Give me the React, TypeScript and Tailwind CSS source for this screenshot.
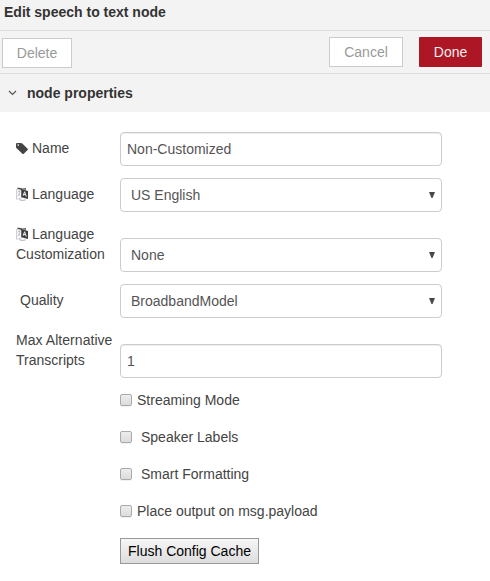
import type { ReactNode } from 'react';

function TagIcon() {
  return (
    <svg className="block h-[13px] w-3" viewBox="0 0 12 13">
      <path
        fillRule="evenodd"
        fill="#444"
        d="M0 2.1Q0 1 1.1 1H4.8Q5.6 1 6.3 1.6L11.6 6.8Q12.2 7.4 11.6 8.1L7.8 11.8Q7.1 12.4 6.4 11.8L.6 6.2Q0 5.6 0 4.9ZM2.2 2.3a.8.8 0 1 0 0 1.6a.8.8 0 1 0 0-1.6Z"
      />
    </svg>
  );
}

function LanguageIcon() {
  return (
    <svg className="block h-[14px] w-3" viewBox="0 0 12 14">
      <path d="M.5 2.6 5.6 1v9.8L.5 12.2Z" fill="#fff" stroke="#c5bfcc" strokeWidth=".8" />
      <path d="M1.4 5.1 4.7 4M2.9 3.2l.2 1.3M4 4.9Q3.4 8 1.5 9.6M1.8 6.4 4.6 9" fill="none" stroke="#aaa4b2" strokeWidth=".7" />
      <path d="M1.5.6 6 1.5V3.3L1.5 1.8Z" fill="#444" />
      <path d="M6 1.5 10 .8V3L6 2.6Z" fill="#777" />
      <path d="M5.3 2.1 12 4v8.1L5.3 10.3Z" fill="#3d3d3d" />
      <path d="M7.1 8.7 8.6 4.7 10.3 9.6M7.7 7.4 9.6 7.9" fill="none" stroke="#fff" strokeWidth=".9" />
      <path d="M3.2 12.6Q6.2 14.1 9.5 12.9" fill="none" stroke="#999" strokeWidth=".8" />
    </svg>
  );
}

function Row({ label, children }: { label: ReactNode; children: ReactNode }) {
  return (
    <div className="flex items-end">
      <div className="mb-2 w-[104px] shrink-0 whitespace-nowrap">{label}</div>
      {children}
    </div>
  );
}

function IconLabel({ icon, text }: { icon: ReactNode; text: string }) {
  return (
    <div className="flex items-center gap-1">
      {icon}
      <span>{text}</span>
    </div>
  );
}

function TextField({ value }: { value: string }) {
  return (
    <input
      type="text"
      defaultValue={value}
      className="h-[34px] w-[322px] rounded border border-[#ccc] bg-white px-1.5 text-[#555] shadow-[inset_0_1px_1px_rgba(0,0,0,0.075)] outline-none"
    />
  );
}

function SelectField({ value }: { value: string }) {
  return (
    <div className="flex h-[34px] w-[322px] items-center justify-between rounded border border-[#ccc] bg-white pl-[10px] pr-[6px] text-[#555]">
      <span>{value}</span>
      <svg className="h-[6px] w-[6px]" viewBox="0 0 6 6">
        <path d="M0 0H6L3.5 6H2.5Z" fill="#484848" />
      </svg>
    </div>
  );
}

function CheckRow({ label, wide }: { label: string; wide?: boolean }) {
  return (
    <label className={`flex h-5 items-center ${wide ? 'gap-[9px]' : 'gap-[5px]'}`}>
      <input
        type="checkbox"
        className="h-3 w-3 appearance-none rounded-[2px] border border-[#aaa] bg-linear-to-b from-[#ededed] to-[#dcdcdc] shadow-[0_1px_0_rgba(0,0,0,0.06)]"
      />
      <span>{label}</span>
    </label>
  );
}

export default function App() {
  return (
    <div className="h-[581px] w-[490px] overflow-hidden bg-white font-['Liberation_Sans',Arial,sans-serif] text-[14px] leading-5 text-[#444]">
      <header className="h-[31px] border-b border-[#ddd] bg-[#f3f3f3] pl-1 pt-[2px] font-bold text-[#333]">
        Edit speech to text node
      </header>
      <div className="flex h-[43px] items-start border-b border-[#ddd] bg-[#f3f3f3] pl-[2px] pr-2 pt-[6px] text-[#999]">
        <button className="mt-px h-[30px] w-[70px] border border-[#ccc] bg-white">Delete</button>
        <button className="ml-auto h-[30px] w-[74px] border border-[#ccc] bg-white">Cancel</button>
        <button className="ml-4 h-[30px] w-[63px] rounded-[1px] bg-[#ad1625] text-[#eee]">Done</button>
      </div>
      <div className="flex h-[38px] items-center bg-[#f3f3f3] pl-2 font-bold text-[#333]">
        <svg className="mr-[10px] h-[6px] w-[9px]" viewBox="0 0 9 6">
          <path d="M1 1 4.5 4.5 8 1" fill="none" stroke="#555" strokeWidth="1.2" />
        </svg>
        node properties
      </div>
      <div className="pl-4 pt-5">
        <div className="flex flex-col gap-3">
          <Row label={<IconLabel icon={<TagIcon />} text="Name" />}>
            <TextField value="Non-Customized" />
          </Row>
          <Row label={<IconLabel icon={<LanguageIcon />} text="Language" />}>
            <SelectField value="US English" />
          </Row>
          <Row
            label={
              <>
                <IconLabel icon={<LanguageIcon />} text="Language" />
                <div>Customization</div>
              </>
            }
          >
            <SelectField value="None" />
          </Row>
          <Row label={<div className="pl-1">Quality</div>}>
            <SelectField value="BroadbandModel" />
          </Row>
          <Row
            label={
              <>
                <span className="tracking-[0.05px]">Max Alternative</span>
                <br />
                Transcripts
              </>
            }
          >
            <TextField value="1" />
          </Row>
        </div>
        <div className="flex flex-col items-start gap-[17px] pl-[104px] pt-3">
          <CheckRow label="Streaming Mode" />
          <CheckRow label="Speaker Labels" wide />
          <CheckRow label="Smart Formatting" wide />
          <CheckRow label="Place output on msg.payload" />
          <button className="h-[26px] w-[139px] whitespace-nowrap border border-[#999] bg-linear-to-b from-[#f6f6f6] to-[#dddddd] text-black">
            Flush Config Cache
          </button>
        </div>
      </div>
    </div>
  );
}
